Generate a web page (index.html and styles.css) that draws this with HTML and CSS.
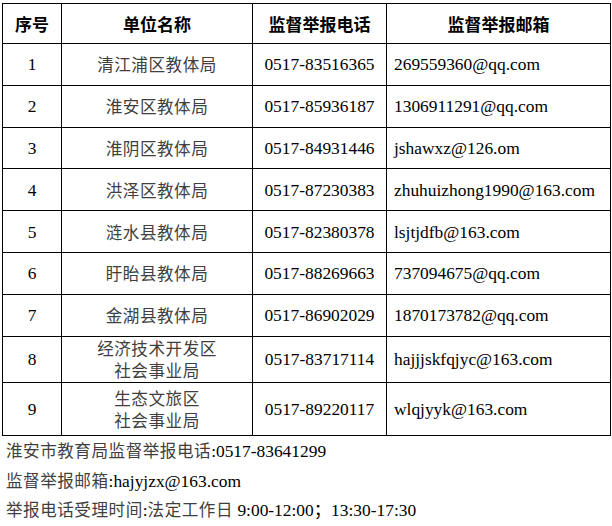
FILE: index.html
```html
<!DOCTYPE html>
<html lang="zh-CN">
<head>
<meta charset="utf-8">
<title>监督举报</title>
<link rel="stylesheet" href="styles.css">
</head>
<body>
<div class="page">
<table class="tbl">
  <colgroup>
    <col class="c1"><col class="c2"><col class="c3"><col class="c4">
  </colgroup>
  <thead>
    <tr class="head">
      <th>序号</th><th>单位名称</th><th>监督举报电话</th><th>监督举报邮箱</th>
    </tr>
  </thead>
  <tbody>
    <tr><td class="num">1</td><td class="cn">清江浦区教体局</td><td class="tel">0517-83516365</td><td class="mail">269559360@qq.com</td></tr>
    <tr><td class="num">2</td><td class="cn">淮安区教体局</td><td class="tel">0517-85936187</td><td class="mail">1306911291@qq.com</td></tr>
    <tr><td class="num">3</td><td class="cn">淮阴区教体局</td><td class="tel">0517-84931446</td><td class="mail">jshawxz@126.om</td></tr>
    <tr><td class="num">4</td><td class="cn">洪泽区教体局</td><td class="tel">0517-87230383</td><td class="mail">zhuhuizhong1990@163.com</td></tr>
    <tr><td class="num">5</td><td class="cn">涟水县教体局</td><td class="tel">0517-82380378</td><td class="mail">lsjtjdfb@163.com</td></tr>
    <tr><td class="num">6</td><td class="cn">盱眙县教体局</td><td class="tel">0517-88269663</td><td class="mail">737094675@qq.com</td></tr>
    <tr><td class="num">7</td><td class="cn">金湖县教体局</td><td class="tel">0517-86902029</td><td class="mail">1870173782@qq.com</td></tr>
    <tr class="tall8"><td class="num">8</td><td class="cn two">经济技术开发区<br>社会事业局</td><td class="tel">0517-83717114</td><td class="mail">hajjjskfqjyc@163.com</td></tr>
    <tr class="tall9"><td class="num">9</td><td class="cn two">生态文旅区<br>社会事业局</td><td class="tel">0517-89220117</td><td class="mail">wlqjyyk@163.com</td></tr>
  </tbody>
</table>
<div class="notes">
  <p><span class="cn">淮安市教育局监督举报电话</span>:0517-83641299</p>
  <p><span class="cn">监督举报邮箱</span>:hajyjzx@163.com</p>
  <p><span class="cn">举报电话受理时间</span>:<span class="cn">法定工作日</span> 9:00-12:00；13:30-17:30</p>
</div>
</div>
</body>
</html>
```
FILE: styles.css
```css
html, body {
  margin: 0;
  padding: 0;
  background: #fff;
}
body {
  font-family: "Liberation Serif", "Noto Sans CJK SC", serif;
  font-size: 17.4px;
  color: #000;
}
.page {
  padding: 3px 0 0 2px;
}
.tbl {
  border-collapse: collapse;
  table-layout: fixed;
  width: 608px;
}
.c1 { width: 59px; }
.c2 { width: 191px; }
.c3 { width: 134px; }
.c4 { width: 224px; }
.tbl th, .tbl td {
  border: 1px solid #000;
  padding: 0;
  height: 40.8px;
  line-height: 22px;
  vertical-align: middle;
  white-space: nowrap;
}
.tbl th {
  font-family: "Noto Sans CJK SC", sans-serif;
  font-weight: 700;
  font-size: 17px;
  text-align: center;
  height: 39px;
}
.num { text-align: center; }
.tbl td.cn {
  text-align: center;
  font-family: "Noto Sans CJK SC", sans-serif;
  font-size: 16.6px;
  color: #3f3f3f;
  letter-spacing: 0.5px;
}
.tel { text-align: center; }
.tbl td.mail { text-align: left; padding-left: 7px; }
.tbl .tall8 td { height: 45px; }
.tbl .tall9 td { height: 52.5px; }
.notes {
  padding-left: 4px;
}
.notes p {
  margin: 0;
  line-height: 28.5px;
}
.notes .cn {
  font-family: "Noto Sans CJK SC", sans-serif;
  font-size: 16.6px;
  color: #3f3f3f;
  letter-spacing: 0.5px;
}
```
